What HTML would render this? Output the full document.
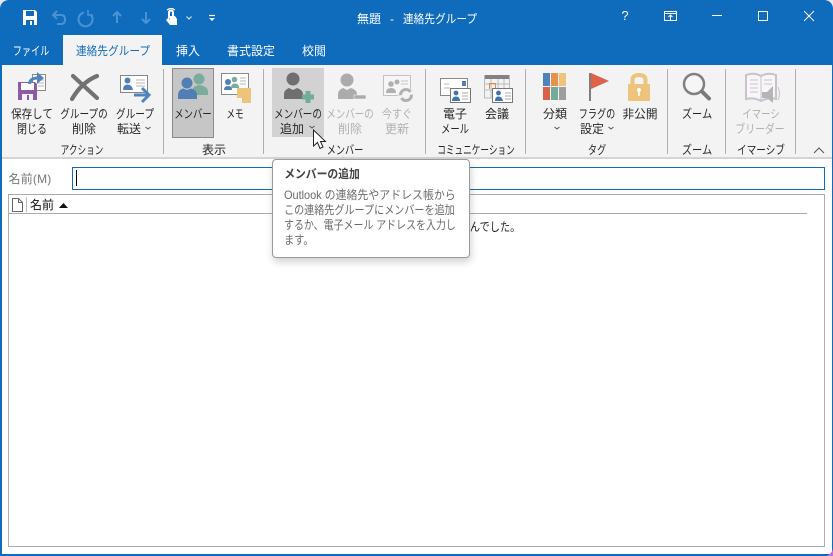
<!DOCTYPE html>
<html lang="ja"><head><meta charset="utf-8"><title>無題 - 連絡先グループ</title>
<style>
html,body{margin:0;padding:0;width:833px;height:556px;overflow:hidden;background:#fff}
body{position:relative;font-family:"Liberation Sans","Noto Sans CJK JP",sans-serif;font-size:12px;color:#262626}
.a{position:absolute}
.t{position:absolute;white-space:nowrap;line-height:16px;height:16px;transform:translateX(-50%) scaleX(var(--s,1));font-size:12px}
.d{color:#b1b1b1}
.w{color:#fff}
.s{position:absolute;top:69px;width:1px;height:85px;background:#b0b0b0}
.tl{position:absolute;left:284px;white-space:nowrap;line-height:15px;height:15px;font-size:12px;color:#6a6a6a;transform-origin:0 50%}
svg{position:absolute;overflow:visible}
</style></head><body>
<div class="a" style="left:0;top:0;width:833px;height:65px;background:#0f6cbd"></div>
<div class="a" style="left:63px;top:35px;width:99px;height:30px;background:#f3f3f3"></div>
<div class="a" style="left:0;top:65px;width:833px;height:92px;background:#f3f3f3"></div>
<div class="a" style="left:0;top:157px;width:833px;height:2px;background:#d4d4d4"></div>
<div class="a" style="left:0;top:65px;width:2px;height:491px;background:#0f6cbd"></div>
<div class="a" style="left:832px;top:65px;width:1px;height:491px;background:#0f6cbd"></div>
<div class="a" style="left:0;top:554px;width:833px;height:2px;background:#0f6cbd"></div>

<!-- corners -->
<svg style="left:0;top:0" width="833" height="556">
<path d="M0 0H8Q1 1 0 8Z" fill="#e8e8ee"/><path d="M833 0H825Q832 1 833 8Z" fill="#e8e8ee"/>
<path d="M833 556H827Q832 553 833 549V556Z" fill="#c86ad8"/>
</svg>

<!-- QAT -->
<svg style="left:0;top:0" width="230" height="36" fill="none">
<path d="M23 10H35L37 12V25H23Z" fill="#fff"/><rect x="26" y="11" width="8" height="5" fill="#0f6cbd"/><rect x="26" y="20" width="8" height="5" fill="#0f6cbd"/><rect x="30" y="21" width="2" height="4" fill="#fff"/>
<g stroke="#4b93d0" stroke-width="2">
<path d="M54 15H61Q65 15 65 19.500T61 24H57"/><path d="M57 11L53 15L57 19"/>
<path d="M84 12.500A7 7 0 1 0 91 15"/><path d="M88 10V15H93" stroke-width="1.600"/>
<path d="M117 23V13M113 16L117 12L121 16"/>
<path d="M146 12V22M142 19L146 23L150 19"/>
</g>
<path d="M169 18V13Q169 10.500 171 10.500T173 13V16.500" stroke="#fff" stroke-width="2"/>
<path d="M167 10Q171 7 175 10" stroke="#fff" stroke-width="1.200"/>
<path d="M166 20L169 17V21L170 16H175L177 19V25H170Z" fill="#fff"/>
<path d="M186.500 16.500L189 19L191.500 16.500" stroke="#d0e2f3" stroke-width="1.200"/>
<path d="M209 15.500H215" stroke="#fff" stroke-width="1.200"/><path d="M209 18H215L212 21Z" fill="#fff"/>
</svg>
<div class="t w" style="left:369px;top:11px">無題</div>
<div class="t w" style="left:392px;top:11px">-</div>
<div class="t w" style="left:439.500px;top:11px;--s:.89">連絡先グループ</div>

<!-- window controls -->
<div class="t w" style="left:625px;top:8px;font-size:13px">?</div>
<svg style="left:660px;top:8px" width="173" height="24" fill="none" stroke="#fff">
<rect x="4.500" y="3.500" width="12" height="9" stroke-width="1"/><path d="M4 5.500H17" stroke-width="1"/><path d="M10.500 12V7.500M8.500 9L10.500 7L12.500 9" stroke-width="1"/>
<path d="M52 7.500H62" stroke-width="1"/>
<rect x="98.500" y="3.500" width="9" height="9" stroke-width="1"/>
<path d="M144 3L154 13M154 3L144 13" stroke-width="1"/>
</svg>

<!-- tabs -->
<div class="t w" style="left:30.500px;top:43px;--s:.76">ファイル</div>
<div class="t" style="left:112.500px;top:43px;color:#0f6cbd;--s:.89">連絡先グループ</div>
<div class="t w" style="left:188px;top:43px">挿入</div>
<div class="t w" style="left:251px;top:43px">書式設定</div>
<div class="t w" style="left:314px;top:43px">校閲</div>

<!-- highlights -->
<div class="a" style="left:172px;top:68px;width:40px;height:68px;background:#c6c6c6;border:1px solid #8a8a8a"></div>
<div class="a" style="left:272px;top:68px;width:52px;height:69px;background:#d2d2d2"></div>

<!-- separators -->
<div class="s" style="left:163px"></div><div class="s" style="left:263px"></div><div class="s" style="left:425px"></div><div class="s" style="left:525px"></div><div class="s" style="left:667px"></div><div class="s" style="left:725px"></div><div class="s" style="left:795px"></div>

<!-- ribbon icons -->
<svg style="left:0;top:60px" width="833" height="50" fill="none">
<!-- save & close -->
<rect x="32.500" y="14.500" width="13" height="16" stroke="#8a8a8a" fill="#fff"/><path d="M38 20H44M38 23H44M38 26H44" stroke="#b5b5b5"/>
<path d="M18 22H35L37 24V40H18Z" fill="#8e5aa8"/><rect x="21" y="23" width="13" height="7" fill="#fff"/><rect x="22" y="34" width="11" height="6" fill="#f3f3f3"/><rect x="27" y="35" width="2" height="5" fill="#8e5aa8"/>
<path d="M29.500 24Q30 18 38 18" stroke="#4f86bd" stroke-width="3"/><path d="M37 12L44 18L37 24Z" fill="#4f86bd"/>
<!-- delete X -->
<path d="M73 16L97 38" stroke="#727272" stroke-width="4.200" stroke-linecap="round"/><path d="M97 16Q82 22 72 39" stroke="#727272" stroke-width="4.200" stroke-linecap="round"/>
<!-- forward -->
<rect x="120.500" y="15.500" width="27" height="17" fill="#fff" stroke="#858585"/>
<circle cx="127.500" cy="20.500" r="3" fill="#4f7fb5"/><path d="M123 30Q123 24.500 127.500 24.500T133 30Z" fill="#4f7fb5"/><path d="M136 20H145M136 23H145M136 26H145" stroke="#b5b5b5"/>
<path d="M134 35H148" stroke="#4f86bd" stroke-width="3"/><path d="M142 28L149 35L142 42" stroke="#4f86bd" stroke-width="3"/>
<!-- members -->
<circle cx="199" cy="19" r="5.500" fill="#7bac9b"/><path d="M192 35V32Q192 26 199 25Q208 26 208 32V35Z" fill="#7bac9b"/>
<circle cx="187" cy="23" r="5.500" fill="#4f7fb5"/><path d="M178 39V35Q178 30 183 28.500L187 30L191 28.500Q197 30 197 35V39Z" fill="#4f7fb5"/>
<!-- memo -->
<rect x="221.500" y="13.500" width="27" height="21" fill="#fff" stroke="#8a8a8a"/>
<circle cx="228" cy="22" r="3" fill="#4f7fb5"/><path d="M224 30Q224 26 228 26T232 30Z" fill="#4f7fb5"/>
<circle cx="234.500" cy="19.500" r="2.800" fill="#7bac9b"/><path d="M231 28Q231 23.500 235 23.500T239 28Z" fill="#7bac9b"/>
<path d="M240 18H246M240 21H246M240 24H246" stroke="#b5b5b5"/>
<path d="M237 28H251V43H242L237 38Z" fill="#eec47c"/><path d="M237 38H242V43Z" fill="#fff"/>
<!-- add member -->
<circle cx="293" cy="19" r="6.500" fill="#6f6f6f"/><path d="M284 39V34Q284 30 289 28L293 30L297 28Q303 30 303 34V39Z" fill="#6f6f6f"/>
<path d="M305.500 31H310.500V34.500H314V39.500H310.500V43H305.500V39.500H302V34.500H305.500Z" fill="#72ab98"/>
<!-- remove member -->
<circle cx="347" cy="20" r="6.500" fill="#ababab"/><path d="M338 39V34Q338 30 343 28L347 30L351 28Q357 30 357 34V39Z" fill="#ababab"/>
<rect x="354" y="35" width="12" height="4" fill="#ababab" stroke="#f3f3f3" stroke-width=".6"/>
<!-- update -->
<rect x="383.500" y="15.500" width="27" height="20" fill="#f6f6f6" stroke="#c5bfc8"/>
<circle cx="391" cy="24" r="2.800" fill="#b0b0b0"/><path d="M386 33Q386 28 391 28T396 33Z" fill="#b0b0b0"/>
<circle cx="397" cy="22" r="2.500" fill="#b0b0b0"/><path d="M401 21H408M401 24H408" stroke="#c5c5c5"/>
<circle cx="406" cy="35" r="7.500" fill="#f3f3f3"/>
<circle cx="406" cy="35" r="5.500" stroke="#b0b0b0" stroke-width="3" stroke-dasharray="14 3"/>
<!-- email -->
<rect x="440.500" y="18.500" width="27" height="17" fill="#fff" stroke="#8a8a8a"/><rect x="462" y="21" width="4" height="5" fill="#4f7fb5"/><path d="M444 24H449M444 28H450" stroke="#bbb"/>
<rect x="450.500" y="28.500" width="20" height="14" fill="#fff" stroke="#777"/><circle cx="456" cy="33" r="2.400" fill="#3f74ae"/><path d="M452 41Q452 36.500 456 36.500T460 41Z" fill="#3f74ae"/><path d="M462 33H468M462 36H468M462 39H468" stroke="#aaa"/>
<!-- meeting -->
<rect x="484" y="15" width="26" height="4" fill="#828282"/><path d="M484.500 15V38H492M509.500 15V28M484 24H510M484 30H492M491 19V38M498 19V28M504 19V28" stroke="#bbb"/>
<path d="M489.500 29V23.500H495.500V28" stroke="#e48a3a"/>
<rect x="492.500" y="28.500" width="20" height="14" fill="#fff" stroke="#777"/><circle cx="498.500" cy="33" r="2.400" fill="#3f74ae"/><path d="M495 41Q495 36.500 498.500 36.500T503 41Z" fill="#3f74ae"/><path d="M505 33H511M505 36H511M505 39H511" stroke="#aaa"/>
<!-- categorize -->
<rect x="543" y="13" width="7" height="13" fill="#4d83bc"/><rect x="551" y="13" width="7" height="13" fill="#e89148"/><rect x="559" y="13" width="7" height="13" fill="#eec47c"/>
<rect x="543" y="27" width="7" height="13" fill="#da6149"/><rect x="551" y="27" width="7" height="13" fill="#72ab98"/><rect x="559" y="27" width="7" height="13" fill="#9e9e9e"/>
<!-- flag -->
<rect x="589" y="13" width="2" height="28" fill="#7d7d7d"/><path d="M591 13L609 21L591 29Z" fill="#dc624a"/>
<!-- lock -->
<path d="M632.500 26V20Q632.500 15 639 15T645.500 20V26" stroke="#eec47c" stroke-width="4"/><rect x="628" y="24" width="22" height="17" rx="1" fill="#eec47c"/><circle cx="639" cy="30" r="2" fill="#fff"/><rect x="638.200" y="31" width="1.600" height="5" fill="#fff"/>
<!-- zoom -->
<circle cx="694" cy="24" r="10" stroke="#808080" stroke-width="2.500" fill="#f6f6f6"/><path d="M702 31.500L709 38.500" stroke="#7a7a7a" stroke-width="4" stroke-linecap="round"/>
<!-- immersive -->
<path d="M746 15Q754 12 761 16Q768 12 776 15V39Q768 37 761 41Q754 37 746 39Z" fill="#f8f6f8" stroke="#c9c2cb" stroke-width="2"/><path d="M761 16V41M750 20H758M750 24H758M750 28H758M750 32H758M764 20H772M764 24H772" stroke="#c9c2cb"/>
<path d="M762 32H767L773 26V43L767 38H762Z" fill="#b5b5b5"/><path d="M775 29Q777 34 775 38M778 27Q781 34 778 40" stroke="#c5c5c5"/>
</svg>

<!-- ribbon labels -->
<div class="t" style="left:32px;top:106px;--s:.875">保存して</div><div class="t" style="left:32px;top:121px;--s:.83">閉じる</div>
<div class="t" style="left:84px;top:106px;--s:.8">グループの</div><div class="t" style="left:84px;top:121px">削除</div>
<div class="t" style="left:134.500px;top:106px;--s:.81">グループ</div><div class="t" style="left:129px;top:121px">転送</div>
<div class="t" style="left:192.500px;top:106px;--s:.78">メンバー</div><div class="t" style="left:235px;top:106px;--s:.72">メモ</div>
<div class="t" style="left:298px;top:106px;--s:.8">メンバーの</div><div class="t" style="left:292px;top:121px">追加</div>
<div class="t d" style="left:350px;top:106px;--s:.79">メンバーの</div><div class="t d" style="left:350px;top:121px">削除</div>
<div class="t d" style="left:397px;top:106px;--s:.83">今すぐ</div><div class="t d" style="left:397px;top:121px">更新</div>
<div class="t" style="left:455px;top:106px">電子</div><div class="t" style="left:455px;top:121px;--s:.78">メール</div>
<div class="t" style="left:497px;top:106px">会議</div>
<div class="t" style="left:555px;top:106px">分類</div>
<div class="t" style="left:596.500px;top:106px;--s:.76">フラグの</div><div class="t" style="left:592px;top:121px">設定</div>
<div class="t" style="left:639.500px;top:106px;--s:.97">非公開</div>
<div class="t" style="left:697px;top:106px;--s:.85">ズーム</div>
<div class="t d" style="left:761px;top:106px;--s:.78">イマーシ</div><div class="t d" style="left:760px;top:121px;--s:.82">ブリーダー</div>

<!-- chevrons -->
<svg style="left:0;top:120px" width="833" height="16" fill="none" stroke="#555">
<path d="M145.500 7L148 9L150.500 7"/><path d="M554.500 7L557 9L559.500 7"/><path d="M608.500 7L611 9L613.500 7"/><path d="M309.500 6L312 8L314.500 6"/>
</svg>

<div class="t" style="left:82px;top:142px;--s:.72">アクション</div>
<div class="t" style="left:214px;top:142px">表示</div>
<div class="t" style="left:344.500px;top:142px;--s:.76">メンバー</div>
<div class="t" style="left:475.500px;top:142px;--s:.72">コミュニケーション</div>
<div class="t" style="left:596.500px;top:142px;--s:.76">タグ</div>
<div class="t" style="left:697px;top:142px;--s:.85">ズーム</div>
<div class="t" style="left:760.500px;top:142px;--s:.8">イマーシブ</div>
<svg style="left:812px;top:146px" width="14" height="8" fill="none"><path d="M2 7L7 2L12 7" stroke="#555"/></svg>

<!-- name field -->
<div class="t" style="left:30px;top:171px;color:#777;letter-spacing:.2px">名前(M)</div>
<div class="a" style="left:72px;top:167px;width:751px;height:21px;border:1px solid #0f6cbd;background:#fff"></div>
<div class="a" style="left:76px;top:170px;width:1px;height:16px;background:#000"></div>

<!-- list -->
<div class="a" style="left:8px;top:194px;width:815px;height:351px;border:1px solid #a7abb2;background:#fff"></div>
<div class="a" style="left:9px;top:213px;width:798px;height:1px;background:#a7abb2"></div>
<svg style="left:11px;top:197px" width="20" height="16" fill="none"><path d="M1.500 1.500H7.500L11.500 5.500V14.500H1.500ZM7.500 1.500V5.500H11.500" stroke="#666"/><path d="M15.500 0V15" stroke="#bbb"/></svg>
<div class="t" style="left:42px;top:197px;color:#111">名前</div>
<svg style="left:58px;top:202px" width="11" height="6"><path d="M1 6L5.500 1L10 6Z" fill="#111"/></svg>
<div class="t" style="left:490px;top:219px;color:#222;--s:.85">せんでした。</div>

<!-- tooltip -->
<div class="a" style="left:272px;top:159px;width:196px;height:97px;background:#fff;border:1px solid #9a9a9a;border-radius:4px;box-shadow:1px 4px 8px rgba(0,0,0,.18)"></div>
<div class="t" style="left:322px;top:166px;color:#444;font-weight:bold;--s:.9">メンバーの追加</div>
<div class="tl" style="top:188px;transform:scaleX(.91)">Outlook の連絡先やアドレス帳から</div>
<div class="tl" style="top:203px;transform:scaleX(.84)">この連絡先グループにメンバーを追加</div>
<div class="tl" style="top:218px;transform:scaleX(.83)">するか、電子メール アドレスを入力し</div>
<div class="tl" style="top:233px;transform:scaleX(.85)">ます。</div>

<!-- cursor -->
<svg style="left:312px;top:129px" width="16" height="22"><path d="M1.500 1V17L5.500 13.500L8 19.500L11 18L8.500 12.500H13.500Z" fill="#fff" stroke="#222"/></svg>
</body></html>
